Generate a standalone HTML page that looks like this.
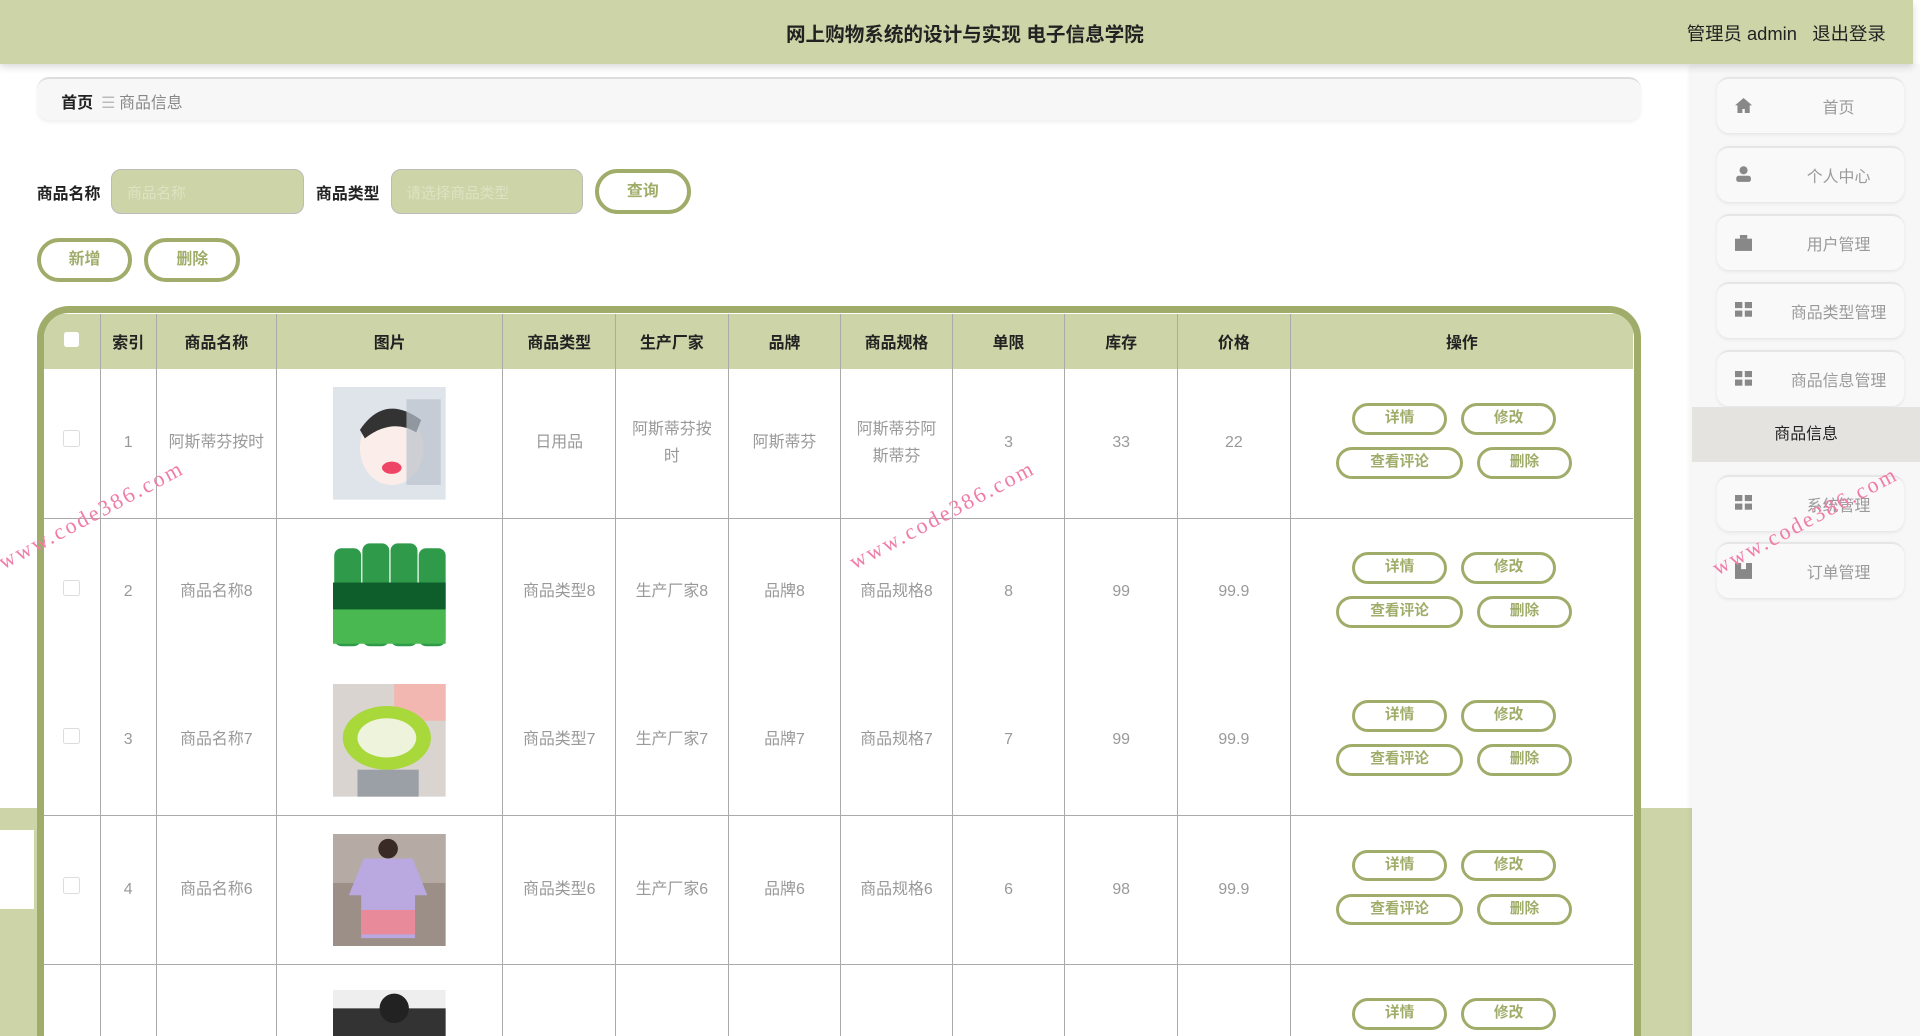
<!DOCTYPE html>
<html><head><meta charset="utf-8"><style>
html,body{margin:0;padding:0;width:1920px;height:1036px;overflow:hidden;background:#fff}
#w{zoom:1.22449;width:1568px;height:846px;position:relative;font-family:"Liberation Sans","Noto Sans CJK SC",sans-serif;background:#fff;overflow:hidden}
.abs{position:absolute}
#hdr{left:0;top:0;width:1562px;height:52px;background:#cdd5a8;box-shadow:0 3px 6px rgba(0,0,0,.15);z-index:3}
#side{left:1382px;top:52px;width:186px;height:794px;background:#f7f7f7;box-shadow:-2px 0 4px rgba(0,0,0,.05)}
.mi{position:absolute;left:20px;width:153px;height:44px;border-radius:10px;border-top:2px solid #e6e6e6;box-shadow:0 1px 3px rgba(0,0,0,.08);background:#f9f9f9;color:#9a9a9a;font-size:13px}
.mi span{position:absolute;left:0;top:13px;padding-left:46px;box-sizing:border-box;width:153px;text-align:center}
.mi i{position:absolute;left:15px;top:15px;width:14px;height:13px}
.btn{position:absolute;border:4px solid #a0ad6a;border-radius:20px;background:#fff;color:#a0ad6a;font-size:13px;font-weight:bold;text-align:center;box-sizing:border-box}
table{border-collapse:collapse;table-layout:fixed}
td,th{padding:0;text-align:center;font-size:13px;color:#999;border-left:1px solid #aaa;font-weight:normal}
th{height:45px;color:#222;font-weight:bold;background:#cdd5a8}
td{height:121px;border-top:1px solid #aaa;line-height:22px}
tr.nb td{border-top:none;height:121px}
.cb{display:inline-block;width:12px;height:12px;border:1px solid #ddd;border-radius:2px;background:#fff}
.ob{position:relative;height:120px}
.ob .btn{border-width:3px;font-size:12px;height:26px;line-height:20px}
.img{display:inline-block;width:92px;height:92px;vertical-align:middle}
.wm{position:absolute;color:#f07ca8;font-family:"Liberation Serif",serif;font-size:18px;transform:rotate(-28deg);letter-spacing:2px;z-index:5}
</style></head><body><div id="w">
<div class="abs" style="left:0;top:660px;width:30px;height:186px;background:#cdd5a8"></div>
<div class="abs" style="left:0;top:678px;width:28px;height:64px;background:#fff"></div>
<div class="abs" style="left:1340px;top:660px;width:42px;height:186px;background:#cdd5a8"></div>
<div id="hdr" class="abs">
 <div class="abs" style="left:0;width:1576px;top:15px;text-align:center;font-size:16px;font-weight:bold;color:#222">网上购物系统的设计与实现 电子信息学院</div>
 <div class="abs" style="right:22px;top:16px;font-size:15px;color:#222">管理员 admin&nbsp;&nbsp;&nbsp;退出登录</div>
</div>
<div id="side" class="abs">
 <div class="mi" style="top:11px"><i><svg width="14" height="13"><path d="M7 0L0 6h2v7h4V9h2v4h4V6h2z" fill="#888"/></svg></i><span>首页</span></div>
 <div class="mi" style="top:67px"><i><svg width="14" height="13"><circle cx="7" cy="3.5" r="3.3" fill="#888"/><rect x="1" y="8" width="12" height="5" rx="2" fill="#888"/></svg></i><span>个人中心</span></div>
 <div class="mi" style="top:123px"><i><svg width="14" height="13"><rect x="0" y="3" width="14" height="10" fill="#888"/><rect x="4" y="0" width="6" height="3" fill="#888"/></svg></i><span>用户管理</span></div>
 <div class="mi" style="top:178px"><i><svg width="14" height="13"><rect x="0" y="0" width="6" height="5" fill="#888"/><rect x="8" y="0" width="6" height="5" fill="#888"/><rect x="0" y="7" width="6" height="5" fill="#888"/><rect x="8" y="7" width="6" height="5" fill="#888"/></svg></i><span>商品类型管理</span></div>
 <div class="mi" style="top:234px"><i><svg width="14" height="13"><rect x="0" y="0" width="6" height="5" fill="#888"/><rect x="8" y="0" width="6" height="5" fill="#888"/><rect x="0" y="7" width="6" height="5" fill="#888"/><rect x="8" y="7" width="6" height="5" fill="#888"/></svg></i><span>商品信息管理</span></div>
 <div class="abs" style="left:0;top:280px;width:186px;height:45px;background:#e5e3e0;text-align:center;line-height:45px;font-size:13px;color:#222">商品信息</div>
 <div class="mi" style="top:336px"><i><svg width="14" height="13"><rect x="0" y="0" width="6" height="5" fill="#888"/><rect x="8" y="0" width="6" height="5" fill="#888"/><rect x="0" y="7" width="6" height="5" fill="#888"/><rect x="8" y="7" width="6" height="5" fill="#888"/></svg></i><span>系统管理</span></div>
 <div class="mi" style="top:391px"><i><svg width="14" height="13"><rect x="0" y="0" width="14" height="13" fill="#888"/><rect x="5" y="0" width="4" height="5" fill="#f9f9f9"/></svg></i><span>订单管理</span></div>
</div>
<div class="abs" style="left:30px;top:63px;width:1310px;height:35px;background:#f7f7f8;border-radius:10px;border-top:2px solid #ddd;box-sizing:border-box;box-shadow:0 2px 3px rgba(0,0,0,.06)">
 <div class="abs" style="left:20px;top:9px;font-size:13px;color:#222;font-weight:bold">首页 <span style="color:#bbb;font-weight:normal;margin:0 3px">☰</span><span style="color:#888;font-weight:normal">商品信息</span></div>
</div>
<div class="abs" style="left:30px;top:148px;font-size:13px;font-weight:bold;color:#222">商品名称</div>
<div class="abs" style="left:91px;top:138px;width:157px;height:37px;background:#cdd5a8;border-radius:8px;border:1px solid #bbb;box-sizing:border-box;color:#dde2c2;font-size:12px;padding:10px 12px">商品名称</div>
<div class="abs" style="left:258px;top:148px;font-size:13px;font-weight:bold;color:#222">商品类型</div>
<div class="abs" style="left:319px;top:138px;width:157px;height:37px;background:#cdd5a8;border-radius:8px;border:1px solid #bbb;box-sizing:border-box;color:#dde2c2;font-size:12px;padding:10px 12px">请选择商品类型</div>
<div class="btn" style="left:486px;top:138px;width:78px;height:37px;line-height:31px">查询</div>
<div class="btn" style="left:30px;top:194px;width:78px;height:36px;line-height:30px">新增</div>
<div class="btn" style="left:118px;top:194px;width:78px;height:36px;line-height:30px">删除</div>
<div class="abs" style="left:30px;top:250px;width:1310px;height:596px;border:6px solid #a0ad6a;border-bottom:none;border-radius:26px 26px 0 0;box-sizing:border-box;overflow:hidden;background:#fff">
<table style="width:1298px;margin-top:1px">
<colgroup><col style="width:46px"><col style="width:46px"><col style="width:98px"><col style="width:185px"><col style="width:92px"><col style="width:92px"><col style="width:92px"><col style="width:91px"><col style="width:92px"><col style="width:92px"><col style="width:92px"><col></colgroup>
<tr><th style="border-left:none"><span class="cb" style="border:none"></span></th><th>索引</th><th>商品名称</th><th>图片</th><th>商品类型</th><th>生产厂家</th><th>品牌</th><th>商品规格</th><th>单限</th><th>库存</th><th>价格</th><th>操作</th></tr>
<tr class="nb"><td style="border-left:none"><span class="cb"></span></td><td>1</td><td>阿斯蒂芬按时</td><td><svg class="img" viewBox="0 0 92 92"><rect width="92" height="92" fill="#dfe4ea"/><ellipse cx="48" cy="50" rx="26" ry="30" fill="#fbeeea"/><path d="M22 35q20-30 50-8l-4 10q-20-12-42 5z" fill="#333"/><ellipse cx="48" cy="66" rx="8" ry="5" fill="#e46"/><rect x="60" y="10" width="28" height="70" fill="#b9c2cc" opacity=".7"/></svg></td><td>日用品</td><td>阿斯蒂芬按<br>时</td><td>阿斯蒂芬</td><td>阿斯蒂芬阿<br>斯蒂芬</td><td>3</td><td>33</td><td>22</td><td><div class="ob"><div class="btn" style="left:50px;top:27px;width:78px">详情</div><div class="btn" style="left:139px;top:27px;width:78px">修改</div><div class="btn" style="left:37px;top:63px;width:104px">查看评论</div><div class="btn" style="left:152px;top:63px;width:78px">删除</div></div></td></tr>
<tr><td style="border-left:none"><span class="cb"></span></td><td>2</td><td>商品名称8</td><td><svg class="img" viewBox="0 0 92 92"><rect width="92" height="92" fill="#fff"/><g fill="#2e9a4a"><rect x="1" y="10" width="22" height="80" rx="6"/><rect x="24" y="6" width="22" height="84" rx="6"/><rect x="47" y="6" width="22" height="84" rx="6"/><rect x="70" y="10" width="22" height="80" rx="6"/></g><rect x="0" y="38" width="92" height="22" fill="#0d5e2a"/><rect x="0" y="60" width="92" height="28" fill="#4ab850"/></svg></td><td>商品类型8</td><td>生产厂家8</td><td>品牌8</td><td>商品规格8</td><td>8</td><td>99</td><td>99.9</td><td><div class="ob"><div class="btn" style="left:50px;top:27px;width:78px">详情</div><div class="btn" style="left:139px;top:27px;width:78px">修改</div><div class="btn" style="left:37px;top:63px;width:104px">查看评论</div><div class="btn" style="left:152px;top:63px;width:78px">删除</div></div></td></tr>
<tr class="nb"><td style="border-left:none"><span class="cb"></span></td><td>3</td><td>商品名称7</td><td><svg class="img" viewBox="0 0 92 92"><rect width="92" height="92" fill="#d9d4d0"/><rect x="50" y="0" width="42" height="30" fill="#f2b7b0"/><ellipse cx="44" cy="44" rx="36" ry="26" fill="#a8d83a"/><ellipse cx="44" cy="44" rx="24" ry="16" fill="#eef4dc"/><rect x="20" y="70" width="50" height="22" fill="#9aa0a6"/></svg></td><td>商品类型7</td><td>生产厂家7</td><td>品牌7</td><td>商品规格7</td><td>7</td><td>99</td><td>99.9</td><td><div class="ob"><div class="btn" style="left:50px;top:27px;width:78px">详情</div><div class="btn" style="left:139px;top:27px;width:78px">修改</div><div class="btn" style="left:37px;top:63px;width:104px">查看评论</div><div class="btn" style="left:152px;top:63px;width:78px">删除</div></div></td></tr>
<tr><td style="border-left:none"><span class="cb"></span></td><td>4</td><td>商品名称6</td><td><svg class="img" viewBox="0 0 92 92"><rect width="92" height="92" fill="#9c8f88"/><rect x="0" y="0" width="92" height="40" fill="#b5aba4"/><path d="M25 20l40 0l12 30l-10 0l0 35l-44 0l0-35l-10 0z" fill="#b9a9e0"/><rect x="23" y="62" width="44" height="20" fill="#e88a9a"/><circle cx="45" cy="12" r="8" fill="#3a2a25"/></svg></td><td>商品类型6</td><td>生产厂家6</td><td>品牌6</td><td>商品规格6</td><td>6</td><td>98</td><td>99.9</td><td><div class="ob"><div class="btn" style="left:50px;top:27px;width:78px">详情</div><div class="btn" style="left:139px;top:27px;width:78px">修改</div><div class="btn" style="left:37px;top:63px;width:104px">查看评论</div><div class="btn" style="left:152px;top:63px;width:78px">删除</div></div></td></tr>
<tr><td style="border-left:none"></td><td></td><td></td><td style="vertical-align:top"><svg class="img" viewBox="0 0 92 92" style="margin-top:20px"><rect width="92" height="92" fill="#eee"/><rect x="0" y="15" width="92" height="77" fill="#333"/><circle cx="50" cy="15" r="12" fill="#222"/></svg></td><td></td><td></td><td></td><td></td><td></td><td></td><td></td><td style="vertical-align:top"><div class="ob"><div class="btn" style="left:50px;top:27px;width:78px">详情</div><div class="btn" style="left:139px;top:27px;width:78px">修改</div></div></td></tr>
</table>
</div>
<div class="wm" style="left:-10px;top:410px">www.code386.com</div>
<div class="wm" style="left:685px;top:410px">www.code386.com</div>
<div class="wm" style="left:1390px;top:415px">www.code386.com</div>
</div></body></html>
